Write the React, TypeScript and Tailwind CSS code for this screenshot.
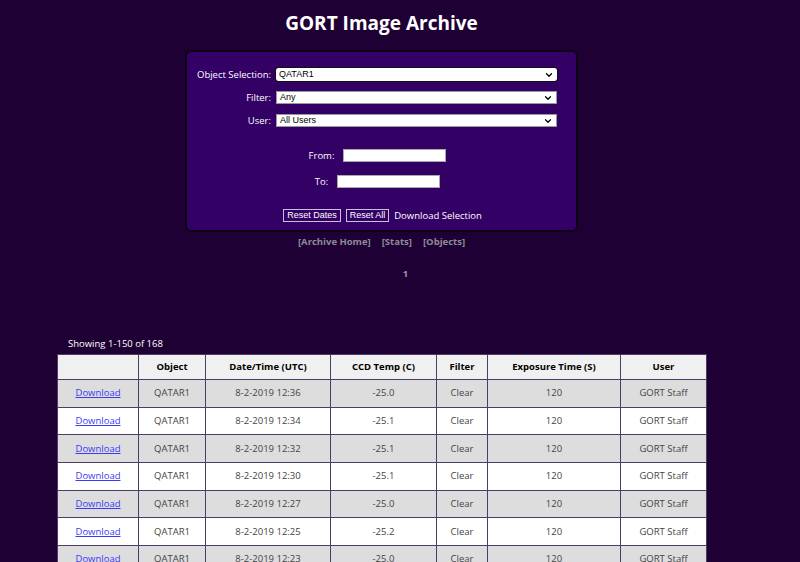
import { ChevronDown } from "lucide-react";

const rows = [
  { time: "8-2-2019 12:36", temp: "-25.0" },
  { time: "8-2-2019 12:34", temp: "-25.1" },
  { time: "8-2-2019 12:32", temp: "-25.1" },
  { time: "8-2-2019 12:30", temp: "-25.1" },
  { time: "8-2-2019 12:27", temp: "-25.0" },
  { time: "8-2-2019 12:25", temp: "-25.2" },
  { time: "8-2-2019 12:23", temp: "-25.0" },
];

function Select({ value, focused }: { value: string; focused?: boolean }) {
  return (
    <div
      className={`flex h-[13px] w-[281px] items-center justify-between bg-white pl-[3px] pr-[3px] ${
        focused ? "rounded-[2px] outline outline-1 outline-[#111]" : "border border-[#999]"
      }`}
      style={{ fontFamily: "'Liberation Sans', Arial, sans-serif" }}
    >
      <span className="text-[9px] leading-none text-black">{value}</span>
      <ChevronDown size={10} strokeWidth={3} className="text-black" />
    </div>
  );
}

function Button({ label }: { label: string }) {
  return (
    <span
      className="inline-flex h-[13px] items-center border border-[#c8c0d8] px-[3px] text-[9px] leading-none text-white"
      style={{ fontFamily: "'Liberation Sans', Arial, sans-serif" }}
    >
      {label}
    </span>
  );
}

export default function App() {
  return (
    <div
      className="h-[562px] w-full overflow-hidden bg-[#1e0035] text-white"
      style={{ fontFamily: "'Open Sans', 'Noto Sans', sans-serif" }}
    >
      <div className="flex w-[763px] flex-col items-center">
        <h1 className="pt-[9px] text-[19px] font-bold leading-[28px] text-white">GORT Image Archive</h1>

        {/* Search panel */}
        <div className="mt-[13px] h-[182px] w-[393px] rounded-[6px] border-2 border-[#0c0014] bg-[#330066]">
          <div className="flex flex-col gap-[10px] pt-[16px]">
            <div className="flex items-center gap-[5px]">
              <span className="w-[84px] text-right text-[9.5px] leading-none">Object Selection:</span>
              <Select value="QATAR1" focused />
            </div>
            <div className="flex items-center gap-[5px]">
              <span className="w-[84px] text-right text-[9.5px] leading-none">Filter:</span>
              <Select value="Any" />
            </div>
            <div className="flex items-center gap-[5px]">
              <span className="w-[84px] text-right text-[9.5px] leading-none">User:</span>
              <Select value="All Users" />
            </div>
          </div>

          <div className="mt-[22px] flex items-center justify-center gap-[9px] pr-[8px]">
            <span className="text-[9.5px] leading-none">From:</span>
            <div className="h-[13px] w-[103px] border border-[#aaa] bg-white" />
          </div>
          <div className="mt-[13px] flex items-center justify-center gap-[9px] pr-[8px]">
            <span className="text-[9.5px] leading-none">To:</span>
            <div className="h-[13px] w-[103px] border border-[#aaa] bg-white" />
          </div>

          <div className="mt-[21px] flex items-center justify-center gap-[5px] pl-[2px]">
            <Button label="Reset Dates" />
            <Button label="Reset All" />
            <span className="text-[9.5px] leading-none">Download Selection</span>
          </div>
        </div>

        <div className="mt-[3px] flex gap-[11px] text-[9.5px] font-bold leading-[14px] text-[#8f8a99]">
          <span>[Archive Home]</span>
          <span>[Stats]</span>
          <span>[Objects]</span>
        </div>

        <div className="mt-[18px] pl-[48px] text-[9.5px] font-bold leading-[14px] text-[#9a96a8]">1</div>

        <div className="mt-[56px] w-[649px]">
          <div className="pl-[11px] text-[9.5px] leading-[14px] text-white">Showing 1-150 of 168</div>
          <table className="mt-[3px] w-[649px] table-fixed border-collapse text-[9.5px] text-[#444]">
            <colgroup>
              <col className="w-[81px]" />
              <col className="w-[67px]" />
              <col className="w-[125px]" />
              <col className="w-[106px]" />
              <col className="w-[51px]" />
              <col className="w-[133px]" />
              <col className="w-[86px]" />
            </colgroup>
            <thead>
              <tr className="h-[25px] bg-[#f0f0f0] text-black">
                <th className="border border-[#4c3d66] font-bold"></th>
                <th className="border border-[#4c3d66] font-bold">Object</th>
                <th className="border border-[#4c3d66] font-bold">Date/Time (UTC)</th>
                <th className="border border-[#4c3d66] font-bold">CCD Temp (C)</th>
                <th className="border border-[#4c3d66] font-bold">Filter</th>
                <th className="border border-[#4c3d66] font-bold">Exposure Time (S)</th>
                <th className="border border-[#4c3d66] font-bold">User</th>
              </tr>
            </thead>
            <tbody>
              {rows.map((r, i) => (
                <tr key={i} className={`h-[27.7px] text-center ${i % 2 === 0 ? "bg-[#dddddd]" : "bg-white"}`}>
                  <td className="border border-[#4c3d66]">
                    <span className="text-[#3b3bf5] underline">Download</span>
                  </td>
                  <td className="border border-[#4c3d66]">QATAR1</td>
                  <td className="border border-[#4c3d66]">{r.time}</td>
                  <td className="border border-[#4c3d66]">{r.temp}</td>
                  <td className="border border-[#4c3d66]">Clear</td>
                  <td className="border border-[#4c3d66]">120</td>
                  <td className="border border-[#4c3d66]">GORT Staff</td>
                </tr>
              ))}
            </tbody>
          </table>
        </div>
      </div>
    </div>
  );
}
